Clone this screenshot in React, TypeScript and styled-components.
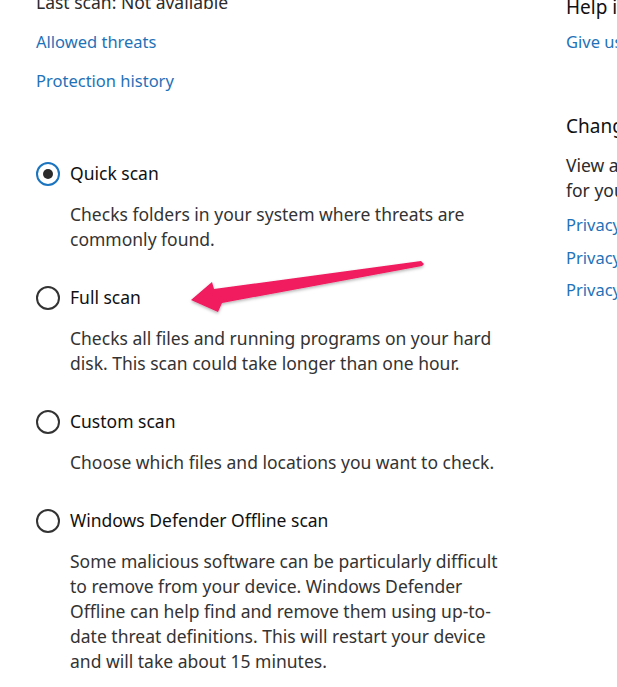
import React from "react";
import styled, { createGlobalStyle } from "styled-components";

const Global = createGlobalStyle`
  html, body { margin: 0; padding: 0; background: #ffffff; overflow: hidden; }
  body { width: 617px; height: 687px; }
`;

const Page = styled.div`
  position: relative;
  width: 617px;
  height: 687px;
  overflow: hidden;
  display: flex;
  font-family: "Noto Sans", "Open Sans", sans-serif;
  font-size: 17.5px;
  line-height: 25px;
  color: #2b2b2b;
`;

const Main = styled.div`
  width: 530px;
  flex: none;
  padding-left: 36px;
  margin-top: -10px;
  display: flex;
  flex-direction: column;
`;

const Side = styled.div`
  width: 320px;
  flex: none;
  margin-top: -5px;
  display: flex;
  flex-direction: column;
`;

const Plain = styled.div<{ $mt?: number }>`
  margin-top: ${(p) => p.$mt ?? 0}px;
  white-space: nowrap;
`;

const Link = styled.a<{ $mt?: number }>`
  display: block;
  margin-top: ${(p) => p.$mt ?? 0}px;
  font-size: 16.5px;
  color: #1f72b8;
  text-decoration: none;
  white-space: nowrap;
`;

const SideTitle = styled.div<{ $mt?: number }>`
  margin-top: ${(p) => p.$mt ?? 0}px;
  font-size: 19px;
  color: #111;
  white-space: nowrap;
`;

const Options = styled.div`
  margin-top: 68px;
  display: flex;
  flex-direction: column;
  gap: 33px;
`;

const Option = styled.div`
  display: flex;
  flex-direction: column;
`;

const OptionRow = styled.label`
  display: flex;
  align-items: center;
  gap: 10px;
  height: 25px;
  color: #111;
`;

const Radio = styled.span<{ $checked?: boolean }>`
  box-sizing: border-box;
  width: 24px;
  height: 24px;
  border-radius: 50%;
  border: 2px solid ${(p) => (p.$checked ? "#1b74bf" : "#333333")};
  display: flex;
  align-items: center;
  justify-content: center;
  flex: none;
  &::after {
    content: "";
    width: 10px;
    height: 10px;
    border-radius: 50%;
    background: #2b2b2b;
    display: ${(p) => (p.$checked ? "block" : "none")};
  }
`;

const Desc = styled.div`
  margin-top: 16px;
  padding-left: 34px;
  color: #333333;
  white-space: nowrap;
`;

const Arrow = styled.svg`
  position: absolute;
  left: 0;
  top: 0;
  pointer-events: none;
`;

const options = [
  {
    label: "Quick scan",
    checked: true,
    lines: ["Checks folders in your system where threats are", "commonly found."],
  },
  {
    label: "Full scan",
    lines: [
      "Checks all files and running programs on your hard",
      "disk. This scan could take longer than one hour.",
    ],
  },
  {
    label: "Custom scan",
    lines: ["Choose which files and locations you want to check."],
  },
  {
    label: "Windows Defender Offline scan",
    lines: [
      "Some malicious software can be particularly difficult",
      "to remove from your device. Windows Defender",
      "Offline can help find and remove them using up-to-",
      "date threat definitions. This will restart your device",
      "and will take about 15 minutes.",
    ],
  },
];

export default function App() {
  return (
    <>
      <Global />
      <Page>
        <Main>
          <Plain>Last scan: Not available</Plain>
          <Link $mt={14}>Allowed threats</Link>
          <Link $mt={14}>Protection history</Link>
          <Options>
            {options.map((o) => (
              <Option key={o.label}>
                <OptionRow>
                  <Radio $checked={o.checked} />
                  {o.label}
                </OptionRow>
                <Desc>
                  {o.lines.map((l, i) => (
                    <React.Fragment key={i}>
                      {l}
                      {i < o.lines.length - 1 && <br />}
                    </React.Fragment>
                  ))}
                </Desc>
              </Option>
            ))}
          </Options>
        </Main>
        <Side>
          <SideTitle>Help improve Windows Defender Antivirus</SideTitle>
          <Link $mt={9}>Give us feedback</Link>
          <SideTitle $mt={60}>Change your privacy settings</SideTitle>
          <Plain $mt={14}>
            View and change privacy settings
            <br />
            for your Windows 10 device.
          </Plain>
          <Link $mt={9}>Privacy settings</Link>
          <Link $mt={7.5}>Privacy dashboard</Link>
          <Link $mt={7.5}>Privacy Statement</Link>
        </Side>
        <Arrow width="617" height="687" viewBox="0 0 617 687">
          <defs>
            <filter id="sh" x="-10%" y="-50%" width="120%" height="200%">
              <feDropShadow dx="0" dy="1.5" stdDeviation="1.5" floodColor="#000" floodOpacity="0.3" />
            </filter>
          </defs>
          <polygon
            points="191,300 212,282 214,289 421,261 424,264 422,266 222,303 218,312"
            fill="#f01a5e"
            filter="url(#sh)"
          />
        </Arrow>
      </Page>
    </>
  );
}
